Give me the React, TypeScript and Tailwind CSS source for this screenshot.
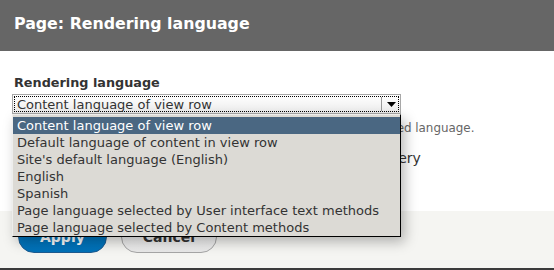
import React from 'react';

const options = [
  'Content language of view row',
  'Default language of content in view row',
  "Site's default language (English)",
  'English',
  'Spanish',
  'Page language selected by User interface text methods',
  'Page language selected by Content methods',
];

const SelectBox: React.FC<{ value: string; selected: number }> = ({ value, selected }) => {
  return (
    <div className="relative w-[389px]">
      <div className="h-[20px] border border-[#a8a8a8] bg-gradient-to-b from-[#ffffff] to-[#ececec] p-px">
        <div className="flex h-full border border-dotted border-black">
          <div className="flex-1 pl-[2px] text-[13px] leading-[15px] text-[#333]">{value}</div>
          <div className="w-px bg-[#9a9a9a]" />
          <div className="flex w-[16px] items-center justify-center pl-[2px]">
            <svg width="9" height="5" viewBox="0 0 9 5">
              <path d="M0 0 H9 L4.5 5 Z" fill="#000" />
            </svg>
          </div>
        </div>
      </div>
      <ul className="absolute left-0 top-full z-10 w-[389px] border-l border-t border-l-[#eeeeec] border-t-[#eeeeec] border-r border-b border-r-black border-b-black bg-[#dcdad5] pt-[2px] shadow-[4px_5px_12px_rgba(0,0,0,0.28)]">
        {options.map((opt, i) => (
          <li
            key={opt}
            className={`h-[17px] pl-[4px] text-[13px] leading-[17px] whitespace-nowrap ${
              i === selected ? 'bg-[#4a6782] text-white' : 'text-[#333]'
            }`}
          >
            {opt}
          </li>
        ))}
      </ul>
    </div>
  );
};

export default function App() {
  return (
    <div className="relative h-[270px] w-[554px] overflow-hidden bg-white font-['DejaVu_Sans',sans-serif]">
      <header className="h-[51px] bg-[#666666] px-[14px] pt-[14px]">
        <h1 className="text-[15.8px] font-bold leading-[20px] text-white">Page: Rendering language</h1>
      </header>

      <main className="h-[160px] px-[12px] pt-[24px]">
        <label className="ml-[2px] block text-[12.8px] font-bold leading-[16px] text-[#333]">
          Rendering language
        </label>
        <div className="mt-[3px]">
          <SelectBox value="Content language of view row" selected={0} />
        </div>
        <p className="ml-[2px] mt-[6px] text-[11.9px] leading-[16px] text-[#666]">
          All content that supports translations will be shown in the selected language.
        </p>
        <p className="ml-[2px] mt-[13px] text-[14px] leading-[18px] text-[#333]">
          Do not add the rendering language filter to the SQL query
        </p>
      </main>

      <footer className="flex h-[57px] gap-[14px] bg-[#f5f5f2] px-[18px] pt-[10px]">
        <button className="h-[32px] rounded-[20em] border border-[#1e5c90] bg-gradient-to-b from-[#007bc6] to-[#0071b8] px-[21px] text-[14px] font-bold text-white">
          Apply
        </button>
        <button className="h-[32px] rounded-[20em] border border-[#a6a6a6] bg-gradient-to-b from-[#fefefe] to-[#e8e8e8] px-[21px] text-[14px] font-bold text-[#333]">
          Cancel
        </button>
      </footer>
      <div className="h-[2px] bg-[#3b3b3b]" />
    </div>
  );
}
